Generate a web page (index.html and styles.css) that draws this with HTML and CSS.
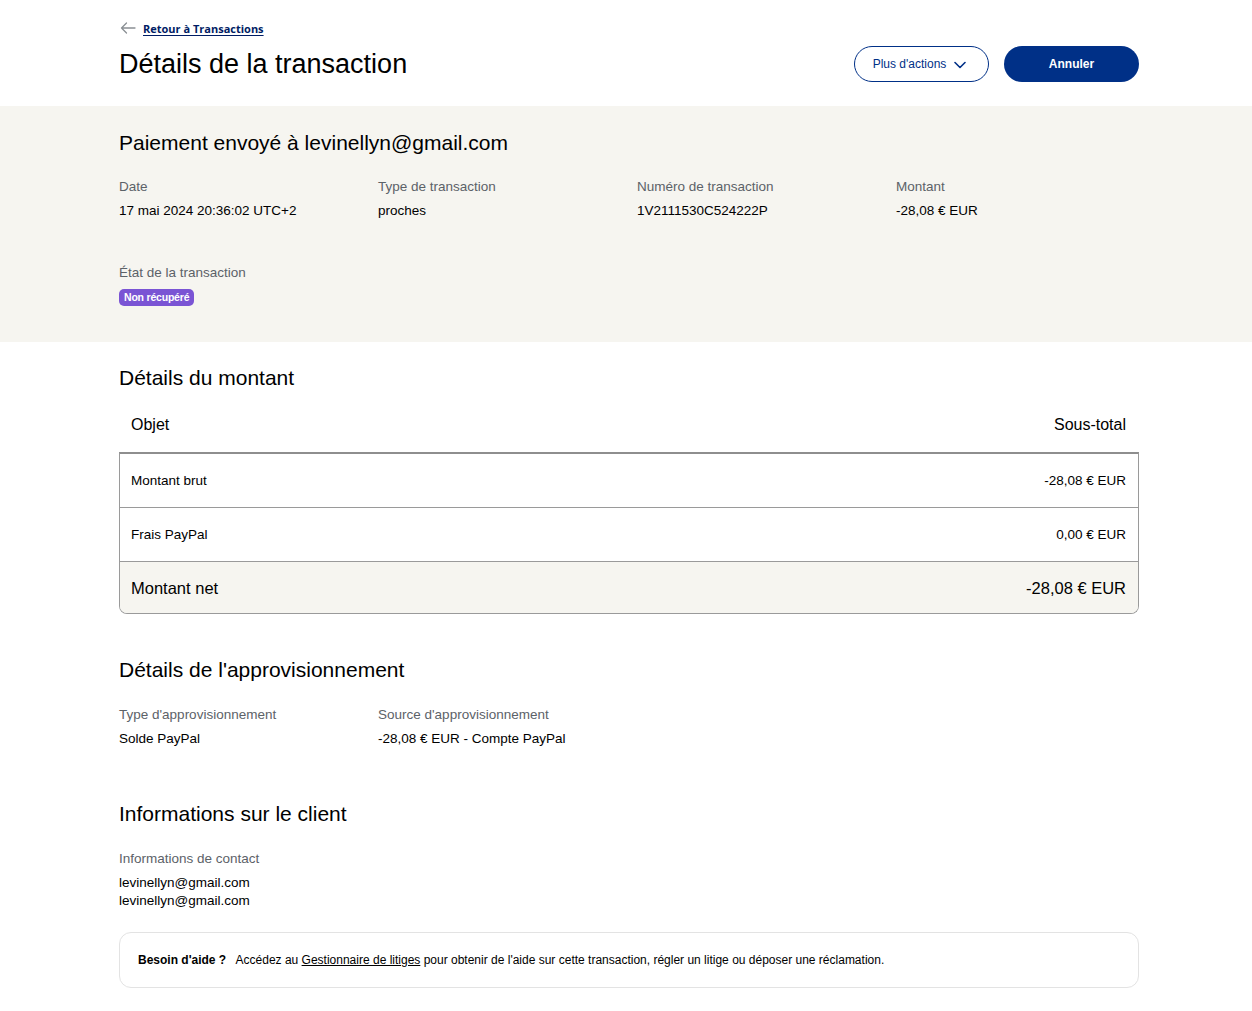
FILE: index.html
```html
<!DOCTYPE html>
<html lang="fr">
<head>
<meta charset="utf-8">
<title>Détails de la transaction</title>
<link rel="stylesheet" href="styles.css">
</head>
<body>
<header class="page-header">
  <div class="container">
    <a class="back-link" href="#">
      <svg class="back-arrow" width="16" height="12" viewBox="0 0 16 12" aria-hidden="true"><path d="M15 6H1.5M6.5 1L1.5 6l5 5" fill="none" stroke="#8a8f94" stroke-width="1.3" stroke-linecap="round" stroke-linejoin="round"/></svg>
      <span class="back-text">Retour à Transactions</span>
    </a>
    <div class="title-row">
      <h1 class="page-title">Détails de la transaction</h1>
      <div class="actions">
        <button class="btn btn-outline">Plus d'actions
          <svg class="chev" width="12" height="8" viewBox="0 0 12 8" aria-hidden="true"><path d="M1 1.5l5 5 5-5" fill="none" stroke="#003087" stroke-width="1.6" stroke-linecap="round" stroke-linejoin="round"/></svg>
        </button>
        <button class="btn btn-primary">Annuler</button>
      </div>
    </div>
  </div>
</header>

<section class="summary">
  <div class="container">
    <h2 class="section-title">Paiement envoyé à levinellyn@gmail.com</h2>
    <div class="grid">
      <div class="field"><div class="label">Date</div><div class="value">17 mai 2024 20:36:02 UTC+2</div></div>
      <div class="field"><div class="label">Type de transaction</div><div class="value">proches</div></div>
      <div class="field"><div class="label">Numéro de transaction</div><div class="value">1V2111530C524222P</div></div>
      <div class="field"><div class="label">Montant</div><div class="value">-28,08 € EUR</div></div>
    </div>
    <div class="status">
      <div class="label">État de la transaction</div>
      <span class="badge">Non récupéré</span>
    </div>
  </div>
</section>

<main class="container">
  <section class="amount">
    <h2 class="section-title">Détails du montant</h2>
    <div class="table-head"><span>Objet</span><span>Sous-total</span></div>
    <div class="table">
      <div class="row"><span>Montant brut</span><span>-28,08 € EUR</span></div>
      <div class="row"><span>Frais PayPal</span><span>0,00 € EUR</span></div>
      <div class="row row-total"><span>Montant net</span><span>-28,08 € EUR</span></div>
    </div>
  </section>

  <section class="funding">
    <h2 class="section-title">Détails de l'approvisionnement</h2>
    <div class="grid grid-tight">
      <div class="field"><div class="label">Type d'approvisionnement</div><div class="value">Solde PayPal</div></div>
      <div class="field"><div class="label">Source d'approvisionnement</div><div class="value">-28,08 € EUR - Compte PayPal</div></div>
    </div>
  </section>

  <section class="client">
    <h2 class="section-title">Informations sur le client</h2>
    <div class="label client-label">Informations de contact</div>
    <div class="emails">
      <div>levinellyn@gmail.com</div>
      <div>levinellyn@gmail.com</div>
    </div>
  </section>

  <div class="help">
    <strong>Besoin d'aide ?</strong>&nbsp;&nbsp; Accédez au <a href="#">Gestionnaire de litiges</a> pour obtenir de l'aide sur cette transaction, régler un litige ou déposer une réclamation.
  </div>
</main>
</body>
</html>
```

FILE: styles.css
```css
* { box-sizing: border-box; }

body {
  margin: 0;
  font-family: "Liberation Sans", Arial, sans-serif;
  color: #000;
  background: #fff;
}

.container {
  width: 1020px;
  margin-left: 119px;
}

/* Header */
.page-header {
  padding-top: 20px;
  padding-bottom: 24px;
}

.back-link {
  display: flex;
  align-items: center;
  gap: 7px;
  height: 16px;
  text-decoration: none;
}

.back-arrow { margin-left: 1px; }

.back-text {
  font-family: "Open Sans", "Noto Sans", sans-serif;
  font-weight: 700;
  font-size: 11px;
  color: #001c64;
  text-decoration: underline;
  text-underline-offset: 2px;
}

.title-row {
  margin-top: 10px;
  height: 36px;
  display: flex;
  align-items: center;
  justify-content: space-between;
}

.page-title {
  margin: 0;
  font-size: 27px;
  font-weight: 400;
  line-height: 36px;
}

.actions {
  display: flex;
  gap: 15px;
}

.btn {
  width: 135px;
  height: 36px;
  border-radius: 18px;
  font-family: "Liberation Sans", Arial, sans-serif;
  font-size: 12px;
  display: flex;
  align-items: center;
  justify-content: center;
  cursor: pointer;
}

.btn-outline {
  background: #fff;
  border: 1px solid #003087;
  color: #003087;
  gap: 8px;
  padding-right: 10px;
}

.chev { margin-top: 1px; }

.btn-primary {
  background: #003087;
  border: none;
  color: #fff;
  font-weight: 700;
}

/* Summary band */
.summary {
  background: #f6f5f0;
  padding-top: 25px;
  padding-bottom: 36px;
}

.section-title {
  margin: 0;
  font-size: 21px;
  font-weight: 400;
  line-height: 24px;
}

.grid {
  display: grid;
  grid-template-columns: repeat(4, 1fr);
  column-gap: 16px;
  margin-top: 22px;
}

.label {
  font-size: 13.5px;
  line-height: 20px;
  color: #5c6268;
}

.value {
  font-size: 13.5px;
  line-height: 20px;
  margin-top: 4px;
  color: #000;
}

.status { margin-top: 42px; }

.badge {
  display: inline-block;
  margin-top: 6px;
  background: #7a54d4;
  color: #fff;
  font-weight: 700;
  font-size: 10.5px;
  line-height: 17px;
  height: 17px;
  padding: 0 5px;
  border-radius: 5px;
  letter-spacing: -0.2px;
}

/* Amount */
.amount { padding-top: 24px; }

.table-head {
  display: flex;
  justify-content: space-between;
  font-size: 16px;
  line-height: 20px;
  padding: 25px 13px 17px 12px;
}

.table {
  border: 1px solid #9a9a9a;
  border-top: 2px solid #8e8e8e;
  border-radius: 0 0 8px 8px;
  overflow: hidden;
}

.row {
  display: flex;
  justify-content: space-between;
  align-items: center;
  height: 54px;
  padding: 0 12px 0 11px;
  font-size: 13.5px;
  border-top: 1px solid #9a9a9a;
}

.row:first-child { border-top: none; height: 53px; }

.row-total {
  background: #f6f5f0;
  font-size: 16.5px;
  height: 52px;
  padding-top: 1px;
}

/* Funding */
.funding { margin-top: 44px; }

.grid-tight { margin-top: 23px; }

/* Client */
.client { margin-top: 53px; }

.client-label { margin-top: 23px; }

.emails {
  margin-top: 5px;
  font-size: 13.5px;
  line-height: 18px;
}

/* Help */
.help {
  margin-top: 22px;
  margin-bottom: 23px;
  height: 56px;
  border: 1px solid #e3e3e3;
  border-radius: 12px;
  padding: 0 18px;
  font-size: 12px;
  line-height: 54px;
  color: #000;
  white-space: nowrap;
}

.help strong { font-weight: 700; }

.help a { color: #000; text-decoration: underline; }
```
